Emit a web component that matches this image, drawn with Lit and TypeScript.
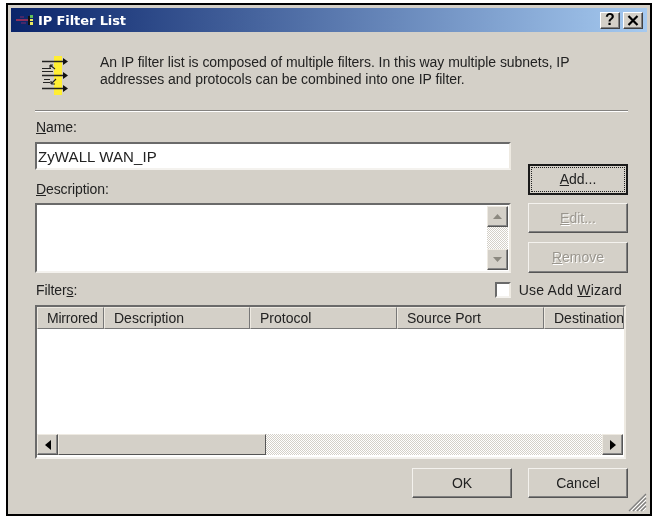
import { LitElement, html, css } from "lit";
import { customElement } from "lit/decorators.js";

@customElement("app-root")
export class AppRoot extends LitElement {
  static styles = css`
    :host { display: block; width: 656px; height: 520px; box-sizing: border-box; padding: 3px 4px 4px 6px; background: #fff;
      font-family: "Liberation Sans", Arial, sans-serif; font-size: 14px; color: #222; }
    .win { box-sizing: border-box; height: 513px; border: 2px solid #000; background: #d4d0c8; padding: 3px 3px 0 3px; position: relative; }
    .inner { filter: blur(0.35px); }
    .title { height: 24px; display: flex; align-items: center; background: linear-gradient(90deg, #0a246a, #a6caf0); color: #fff; font: bold 13px "DejaVu Sans", sans-serif; padding: 0 4px 0 4px; gap: 3px; }
    .title .t { flex: 1; letter-spacing: -0.1px; }
    .cap { width: 20px; height: 17px; box-sizing: border-box; background: #d4d0c8; border: 1px solid; border-color: #fff #404040 #404040 #fff; box-shadow: inset -1px -1px 0 #808080; display: flex; align-items: center; justify-content: center; color: #000; font: bold 16px "Liberation Sans", sans-serif; }
    .cap.close { margin-left: 0; }
    .body { margin: 0 -3px; padding: 0 22px 0 27px; }
    .intro { height: 78px; box-sizing: border-box; padding: 22px 0 0 5px; display: flex; gap: 31px; line-height: 17px; letter-spacing: -0.04px; }
    .intro svg { flex: none; }
    .intro p { margin: 0; }
    .sep { height: 2px; background: linear-gradient(#848280 50%, #fff 50%); }
    .form { display: grid; grid-template-columns: 476px 100px; column-gap: 17px; margin-top: 7px; }
    label { display: block; line-height: 16px; padding-left: 1px; letter-spacing: -0.1px; }
    .left { display: flex; flex-direction: column; }
    .sunken { box-sizing: border-box; border: 2px solid; border-color: #6a6a6a #eeeae2 #f4f2ee #6a6a6a; background: #fff; }
    .input { height: 28px; margin-top: 7px; margin-bottom: 11px; padding: 3px 0 0 1px; line-height: 19px; font-size: 15px; letter-spacing: 0.1px; }
    .area { height: 70px; margin-top: 6px; display: flex; justify-content: flex-end; padding: 1px 1px 1px 0; }
    .vbar { width: 21px; display: flex; flex-direction: column; justify-content: space-between; background: repeating-conic-gradient(#d4d0c8 0 25%, #fff 0 50%) 0 0 / 2px 2px; }
    .sb { box-sizing: border-box; background: #d4d0c8; border: 1px solid; border-color: #eeeae2 #555 #555 #eeeae2; box-shadow: inset -1px -1px 0 #888; display: flex; align-items: center; justify-content: center; width: 21px; height: 21px; flex: none; }
    .right { display: flex; flex-direction: column; padding-top: 45px; }
    .btn { box-sizing: border-box; width: 100px; height: 30px; padding-bottom: 1px; background: #d4d0c8; border: 1px solid; border-color: #f4f2ee #555 #555 #f4f2ee; box-shadow: inset -1px -1px 0 #808080; display: flex; align-items: center; justify-content: center; color: #222; }
    .btn.def { height: 31px; border: 2px solid #1a1a1a; box-shadow: none; padding: 1px; margin-bottom: 8px; }
    .btn.def span { flex: 1; align-self: stretch; border: 1px dotted #222; display: flex; align-items: center; justify-content: center; padding-bottom: 2px; }
    .btn.dis { color: #9a968e; text-shadow: 1px 1px 0 #fff; }
    .btn.edit { margin-bottom: 9px; }
    .btn.rem { height: 31px; }
    .frow { display: flex; align-items: center; height: 16px; margin-top: 9px; }
    .frow label { flex: 1; }
    .check { width: 16px; height: 16px; margin-right: 8px; }
    .wiz { margin-right: 6px; letter-spacing: 0.2px; }
    .list { height: 154px; margin-top: 7px; width: 591px; display: flex; flex-direction: column; }
    .head { height: 22px; display: grid; grid-template-columns: 67px 146px 147px 147px 1fr; flex: none; }
    .col { box-sizing: border-box; background: #d4d0c8; border: 1px solid; border-color: #eeeae2 #777 #777 #eeeae2; padding: 0 0 0 9px; line-height: 20px; white-space: nowrap; overflow: hidden; color: #222; }
    .col.m { letter-spacing: -0.2px; }
    .rows { flex: 1; }
    .hbar { height: 21px; display: flex; background: repeating-conic-gradient(#d4d0c8 0 25%, #fff 0 50%) 0 0 / 2px 2px; margin: 0 1px 2px 0; flex: none; }
    .thumb { width: 208px; height: 21px; box-sizing: border-box; background: #d4d0c8; border: 1px solid; border-color: #eeeae2 #555 #555 #eeeae2; flex: none; }
    .sp { flex: 1; }
    .foot { display: flex; justify-content: flex-end; gap: 16px; margin-top: 9px; }
    .grip { position: absolute; right: 3px; bottom: 2px; }
  `;

  render() {
    return html`<div class="win"><div class="inner">
      <div class="title">
        <svg width="20" height="18" viewBox="0 0 20 18">
          <path d="M1 9h12" stroke="#8a2f5c" stroke-width="2" fill="none"/>
          <path d="M5 6h4M6 12h5" stroke="#5a2a6a" stroke-width="1.5" fill="none"/>
          <rect x="13" y="5" width="2" height="9" fill="#111"/>
          <rect x="15" y="4" width="3" height="3" fill="#5fbf5a"/><rect x="15" y="8" width="3" height="2" fill="#e8e860"/><rect x="15" y="11" width="3" height="3" fill="#e8e860"/>
        </svg>
        <span class="t">IP Filter List</span>
        <div class="cap">?</div>
        <div class="cap close"><svg width="12" height="11" viewBox="0 0 12 11"><path d="M1.5 1l9 9M10.5 1l-9 9" stroke="#000" stroke-width="2.2"/></svg></div>
      </div>
      <div class="body">
        <div class="intro">
          <svg width="29" height="42" viewBox="0 0 29 42">
            <rect x="14" y="2" width="8" height="39" fill="#ffee33"/>
            <g stroke="#222" stroke-width="1.1" fill="none">
              <path d="M2 7.5h22M2 21.5h22M2 34.5h22" stroke-width="1.3"/>
              <path d="M2 14.5h9M2 17.5h11M4 25.5h6M3 28.5h7"/>
              <path d="M10 11l5 4M10 11v3M10 11h3"/>
              <path d="M16 25l-5 5M11 30h4M11 30v-3"/>
            </g>
            <path d="M23 4l5 3.5-5 3.5zM23 18l5 3.5-5 3.5zM23 31l5 3.5-5 3.5z" fill="#111"/>
          </svg>
          <p>An IP filter list is composed of multiple filters. In this way multiple subnets, IP<br>addresses and protocols can be combined into one IP filter.</p>
        </div>
        <div class="sep"></div>
        <div class="form">
          <div class="left">
            <label><u>N</u>ame:</label>
            <div class="sunken input">ZyWALL WAN_IP</div>
            <label><u>D</u>escription:</label>
            <div class="sunken area">
              <div class="vbar">
                <div class="sb"><svg width="9" height="5"><path d="M4.5 0L9 5H0z" fill="#8c8980"/></svg></div>
                <div class="sb"><svg width="9" height="5"><path d="M0 0h9L4.5 5z" fill="#8c8980"/></svg></div>
              </div>
            </div>
          </div>
          <div class="right">
            <div class="btn def"><span><u>A</u>dd...</span></div>
            <div class="btn dis edit"><span><u>E</u>dit...</span></div>
            <div class="btn dis rem"><span><u>R</u>emove</span></div>
          </div>
        </div>
        <div class="frow">
          <label>Filter<u>s</u>:</label>
          <div class="sunken check"></div>
          <span class="wiz">Use Add <u>W</u>izard</span>
        </div>
        <div class="sunken list">
          <div class="head">
            <div class="col m">Mirrored</div><div class="col">Description</div><div class="col">Protocol</div><div class="col">Source Port</div><div class="col">Destination</div>
          </div>
          <div class="rows"></div>
          <div class="hbar">
            <div class="sb"><svg width="6" height="10"><path d="M6 0v10L0 5z" fill="#000"/></svg></div>
            <div class="thumb"></div>
            <div class="sp"></div>
            <div class="sb"><svg width="6" height="10"><path d="M0 0l6 5-6 5z" fill="#000"/></svg></div>
          </div>
        </div>
        <div class="foot">
          <div class="btn">OK</div>
          <div class="btn">Cancel</div>
        </div>
      </div>
      </div>
      <svg class="grip" width="19" height="19" viewBox="0 0 19 19">
        <path d="M18 1L1 18M18 5L5 18M18 9L9 18M18 13L13 18" stroke="#808080" stroke-width="1.3"/>
        <path d="M18 3L3 18M18 7L7 18M18 11L11 18M18 15L15 18" stroke="#fff" stroke-width="1"/>
      </svg>
    </div>`;
  }
}
